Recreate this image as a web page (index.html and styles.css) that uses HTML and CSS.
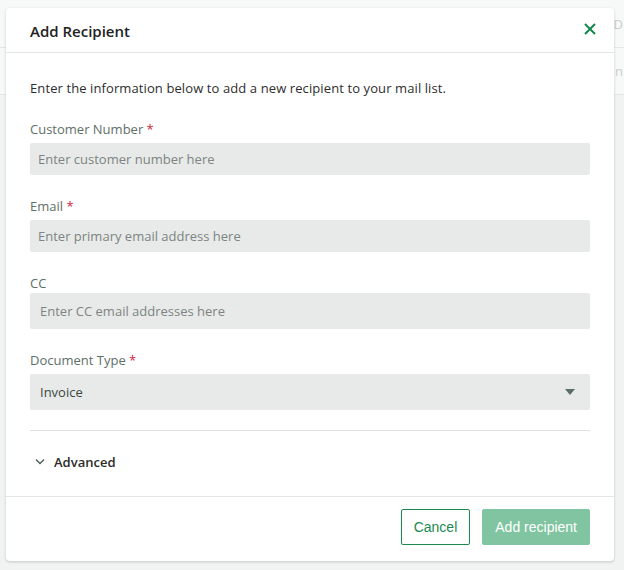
FILE: index.html
```html
<!DOCTYPE html>
<html>
<head>
  <meta charset="utf-8">
  <title>Add Recipient</title>
  <link rel="stylesheet" href="styles.css">
</head>
<body>
  <div class="page">
    <div class="page-head"><span class="page-col">D</span></div>
    <div class="page-row"><span class="page-col">n</span></div>
  </div>

  <div class="modal">
    <div class="modal-header">
      <h2 class="modal-title">Add Recipient</h2>
      <button class="modal-close" aria-label="Close">
        <svg width="12" height="12" viewBox="0 0 12 12"><path d="M1 1L11 11M11 1L1 11" stroke="#12884c" stroke-width="2" fill="none"/></svg>
      </button>
    </div>

    <div class="modal-body">
      <p class="intro">Enter the information below to add a new recipient to your mail list.</p>

      <div class="field">
        <label class="field-label">Customer Number <span class="req">*</span></label>
        <input class="field-input" type="text" placeholder="Enter customer number here">
      </div>

      <div class="field">
        <label class="field-label">Email <span class="req">*</span></label>
        <input class="field-input" type="text" placeholder="Enter primary email address here">
      </div>

      <div class="field field-cc">
        <label class="field-label">CC</label>
        <input class="field-input field-tall" type="text" placeholder="Enter CC email addresses here">
      </div>

      <div class="field field-select">
        <label class="field-label">Document Type <span class="req">*</span></label>
        <div class="select">
          <span>Invoice</span>
          <svg width="10" height="6" viewBox="0 0 10 6"><path d="M0 0H10L5 6Z" fill="#5b6d65"/></svg>
        </div>
      </div>

      <div class="advanced">
        <svg width="10" height="6" viewBox="0 0 10 6"><path d="M1 0.5L5 4.5L9 0.5" stroke="#4c5a54" stroke-width="1.3" fill="none"/></svg>
        <span>Advanced</span>
      </div>
    </div>

    <div class="modal-footer">
      <button class="btn btn-outline">Cancel</button>
      <button class="btn btn-primary">Add recipient</button>
    </div>
  </div>
</body>
</html>
```

FILE: styles.css
```css
body {
  margin: 0;
  background: #f1f3f2;
  font-family: "Open Sans", "Noto Sans", sans-serif;
  color: #2a2a2a;
}

/* list page sitting behind the dialog */
.page {
  height: 570px;
}
.page-head {
  height: 47px;
  background: #f7f8f8;
  border-bottom: 1px solid #e4e7e6;
  display: flex;
  justify-content: flex-end;
  align-items: center;
}
.page-row {
  height: 46px;
  background: #f7f8f8;
  border-bottom: 1px solid #e4e7e6;
  display: flex;
  justify-content: flex-end;
  align-items: center;
}
.page-col {
  padding-right: 1px;
  color: #c9cfcc;
  font-size: 13px;
}

.modal {
  position: absolute;
  left: 6px;
  top: 8px;
  width: 608px;
  height: 553px;
  background: #fff;
  border-radius: 4px;
  box-shadow: 0 1px 3px rgba(0, 0, 0, 0.18);
  display: flex;
  flex-direction: column;
}
.modal-header {
  height: 44px;
  padding: 0 18px 0 24px;
  border-bottom: 1px solid #e3e6e5;
  display: flex;
  align-items: center;
  justify-content: space-between;
}
.modal-title {
  margin: 2px 0 0;
  font-size: 15px;
  font-weight: 600;
  color: #222;
}
.modal-close {
  border: 0;
  background: none;
  padding: 0;
  display: flex;
  margin-top: -2px;
}

.modal-body {
  flex: 1;
  padding: 0 24px;
}
.intro {
  margin: 26px 0 0;
  font-size: 13px;
  line-height: 18px;
  letter-spacing: 0.1px;
  color: #2e2e2e;
}
.field {
  margin-top: 23px;
}
.field + .field {
  margin-top: 22px;
}
.field-label {
  display: block;
  font-size: 13px;
  line-height: 18px;
  color: #5e6f68;
  margin-bottom: 5px;
}
.field-cc .field-label {
  margin-bottom: 1px;
}
.req {
  color: #d0243a;
}
.field-input {
  display: block;
  box-sizing: border-box;
  width: 100%;
  height: 32px;
  border: 0;
  border-radius: 2px;
  background: #e7eae9;
  padding: 0 8px;
  font-family: inherit;
  font-size: 13px;
  color: #333;
}
.field-tall {
  height: 36px;
  padding: 0 10px;
}
.field-input::placeholder {
  color: #7d8481;
}
.select {
  height: 36px;
  border-radius: 2px;
  background: #e7eae9;
  padding: 0 15px 0 10px;
  display: flex;
  align-items: center;
  justify-content: space-between;
  font-size: 13px;
  color: #3b4842;
}

.advanced {
  margin-top: 20px;
  border-top: 1px solid #dfe2e1;
  padding-top: 21px;
  height: 20px;
  display: flex;
  align-items: center;
  gap: 9px;
  font-size: 13px;
  font-weight: 600;
  color: #2b2b2b;
}
.advanced svg {
  margin-left: 5px;
}

.modal-footer {
  border-top: 1px solid #e3e6e5;
  padding: 12px 24px 16px;
  display: flex;
  justify-content: flex-end;
  gap: 12px;
}
.btn {
  height: 36px;
  border-radius: 2px;
  font-family: "Liberation Sans", Arial, sans-serif;
  font-size: 14px;
  padding: 0 12px;
}
.btn-outline {
  background: #fff;
  border: 1px solid #1a8a4f;
  color: #1a8a4f;
}
.btn-primary {
  background: #80c4a1;
  border: 1px solid #80c4a1;
  color: #fff;
}
```
